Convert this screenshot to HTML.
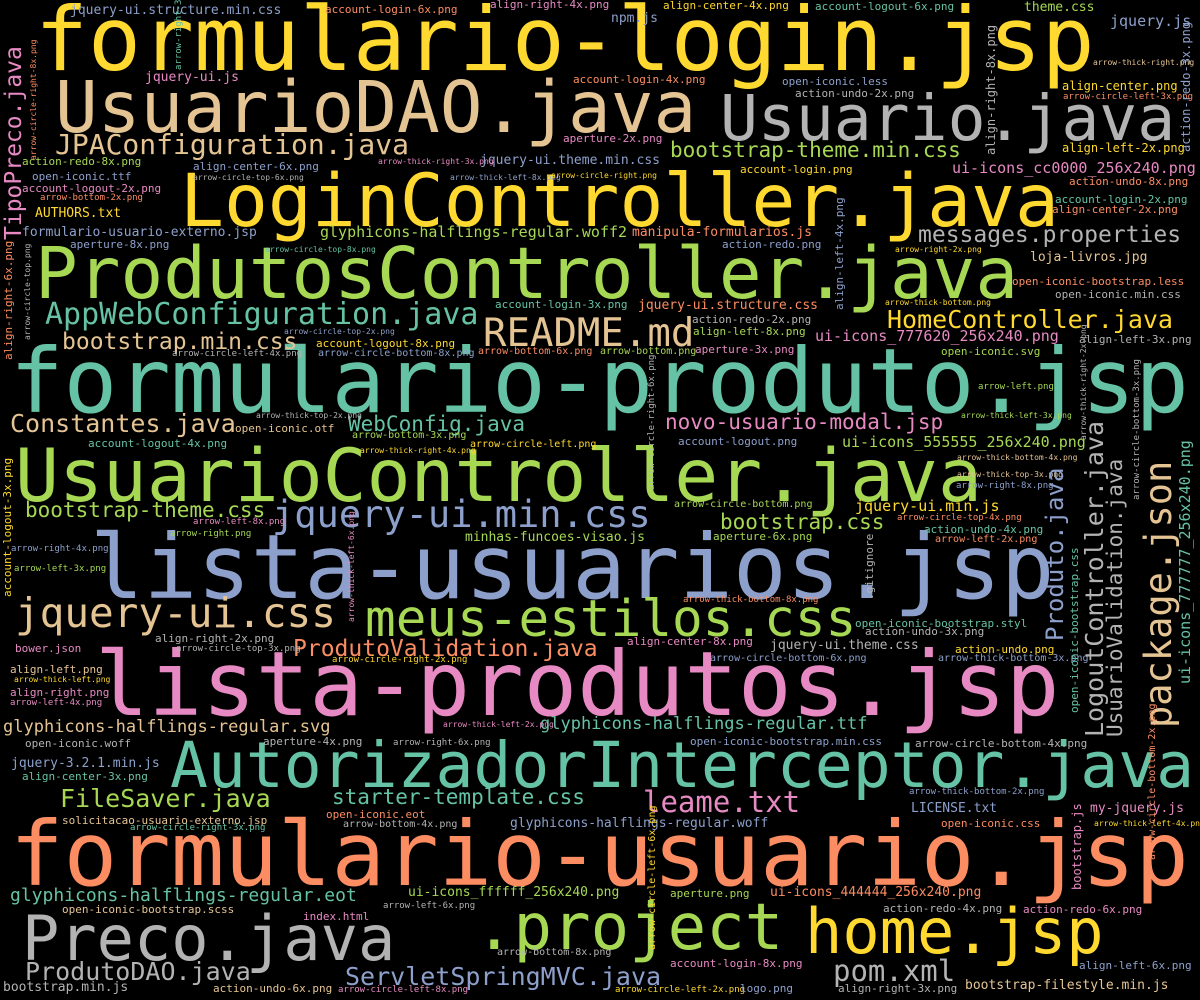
<!DOCTYPE html>
<html><head><meta charset="utf-8"><style>
html,body{margin:0;padding:0;background:#000;width:1200px;height:1000px;overflow:hidden}
body{position:relative;font-family:"DejaVu Sans Mono","Liberation Mono",monospace}
span{position:absolute;white-space:nowrap;line-height:1}
.v{transform:rotate(-90deg);transform-origin:left top}
.G{color:#ffd92f}.g{color:#a6d854}.t{color:#66c2a5}.s{color:#fc8d62}.b{color:#8da0cb}.p{color:#e78ac3}.n{color:#e5c494}.y{color:#b3b3b3}
</style></head><body>
<span class="G" style="left:35px;top:-4px;font-size:88px">formulario-login.jsp</span>
<span class="n" style="left:55px;top:72px;font-size:71px">UsuarioDAO.java</span>
<span class="y" style="left:720px;top:87px;font-size:63px">Usuario.java</span>
<span class="n" style="left:55px;top:131px;font-size:28px">JPAConfiguration.java</span>
<span class="G" style="left:180px;top:165px;font-size:73px">LoginController.java</span>
<span class="g" style="left:35px;top:238px;font-size:71px">ProdutosController.java</span>
<span class="t" style="left:45px;top:300px;font-size:30px">AppWebConfiguration.java</span>
<span class="n" style="left:483px;top:314px;font-size:39px">README.md</span>
<span class="t" style="left:10px;top:337px;font-size:89px">formulario-produto.jsp</span>
<span class="n" style="left:10px;top:411px;font-size:25px">Constantes.java</span>
<span class="t" style="left:348px;top:414px;font-size:21px">WebConfig.java</span>
<span class="p" style="left:665px;top:412px;font-size:21px">novo-usuario-modal.jsp</span>
<span class="g" style="left:15px;top:440px;font-size:73px">UsuarioController.java</span>
<span class="b" style="left:272px;top:496px;font-size:37px">jquery-ui.min.css</span>
<span class="g" style="left:25px;top:500px;font-size:21px">bootstrap-theme.css</span>
<span class="b" style="left:90px;top:523px;font-size:89px">lista-usuarios.jsp</span>
<span class="n" style="left:15px;top:593px;font-size:41px">jquery-ui.css</span>
<span class="g" style="left:365px;top:594px;font-size:51px">meus-estilos.css</span>
<span class="p" style="left:95px;top:640px;font-size:89px">lista-produtos.jsp</span>
<span class="t" style="left:170px;top:734px;font-size:63px">AutorizadorInterceptor.java</span>
<span class="s" style="left:10px;top:810px;font-size:89px">formulario-usuario.jsp</span>
<span class="y" style="left:22px;top:908px;font-size:62px">Preco.java</span>
<span class="g" style="left:475px;top:896px;font-size:64px">.project</span>
<span class="G" style="left:805px;top:901px;font-size:62px">home.jsp</span>
<span class="p" style="left:643px;top:788px;font-size:29px">leame.txt</span>
<span class="g" style="left:670px;top:140px;font-size:21px">bootstrap-theme.min.css</span>
<span class="p" style="left:952px;top:161px;font-size:15px">ui-icons_cc0000_256x240.png</span>
<span class="y" style="left:918px;top:224px;font-size:23px">messages.properties</span>
<span class="G" style="left:887px;top:307px;font-size:25px">HomeController.java</span>
<span class="n" style="left:62px;top:331px;font-size:23px">bootstrap.min.css</span>
<span class="G" style="left:855px;top:499px;font-size:15px">jquery-ui.min.js</span>
<span class="g" style="left:720px;top:512px;font-size:21px">bootstrap.css</span>
<span class="g" style="left:60px;top:786px;font-size:25px">FileSaver.java</span>
<span class="t" style="left:332px;top:787px;font-size:21px">starter-template.css</span>
<span class="t" style="left:10px;top:887px;font-size:18px">glyphicons-halflings-regular.eot</span>
<span class="n" style="left:3px;top:719px;font-size:17px">glyphicons-halflings-regular.svg</span>
<span class="t" style="left:540px;top:716px;font-size:17px">glyphicons-halflings-regular.ttf</span>
<span class="y" style="left:25px;top:959px;font-size:25px">ProdutoDAO.java</span>
<span class="b" style="left:345px;top:964px;font-size:25px">ServletSpringMVC.java</span>
<span class="y" style="left:833px;top:957px;font-size:29px">pom.xml</span>
<span class="s" style="left:293px;top:638px;font-size:23px">ProdutoValidation.java</span>
<span class="G" style="left:35px;top:207px;font-size:13px">AUTHORS.txt</span>
<span class="b" style="left:22px;top:226px;font-size:13px">formulario-usuario-externo.jsp</span>
<span class="g" style="left:320px;top:225px;font-size:15px">glyphicons-halflings-regular.woff2</span>
<span class="s" style="left:632px;top:226px;font-size:13px">manipula-formularios.js</span>
<span class="b" style="left:480px;top:154px;font-size:13px">jquery-ui.theme.min.css</span>
<span class="g" style="left:465px;top:531px;font-size:13px">minhas-funcoes-visao.js</span>
<span class="b" style="left:11px;top:757px;font-size:13px">jquery-3.2.1.min.js</span>
<span class="p" style="left:145px;top:71px;font-size:13px">jquery-ui.js</span>
<span class="b" style="left:611px;top:12px;font-size:13px">npm.js</span>
<span class="g" style="left:1024px;top:1px;font-size:13px">theme.css</span>
<span class="b" style="left:1110px;top:14px;font-size:15px">jquery.js</span>
<span class="b" style="left:70px;top:4px;font-size:13px">jquery-ui.structure.min.css</span>
<span class="s" style="left:325px;top:4px;font-size:11px">account-login-6x.png</span>
<span class="p" style="left:490px;top:-1px;font-size:11px">align-right-4x.png</span>
<span class="G" style="left:663px;top:0px;font-size:11px">align-center-4x.png</span>
<span class="t" style="left:815px;top:1px;font-size:11px">account-logout-6x.png</span>
<span class="n" style="left:1093px;top:59px;font-size:8px">arrow-thick-right.png</span>
<span class="s" style="left:573px;top:74px;font-size:11px">account-login-4x.png</span>
<span class="b" style="left:782px;top:76px;font-size:11px">open-iconic.less</span>
<span class="y" style="left:795px;top:88px;font-size:11px">action-undo-2x.png</span>
<span class="p" style="left:563px;top:133px;font-size:11px">aperture-2x.png</span>
<span class="G" style="left:1062px;top:80px;font-size:12px">align-center.png</span>
<span class="s" style="left:1063px;top:93px;font-size:9px">arrow-circle-left-3x.png</span>
<span class="G" style="left:1062px;top:142px;font-size:12px">align-left-2x.png</span>
<span class="g" style="left:22px;top:156px;font-size:11px">action-redo-8x.png</span>
<span class="p" style="left:378px;top:158px;font-size:8px">arrow-thick-right-3x.png</span>
<span class="b" style="left:32px;top:171px;font-size:11px">open-iconic.ttf</span>
<span class="p" style="left:22px;top:183px;font-size:11px">account-logout-2x.png</span>
<span class="s" style="left:40px;top:194px;font-size:9px">arrow-bottom-2x.png</span>
<span class="b" style="left:193px;top:161px;font-size:11px">align-center-6x.png</span>
<span class="y" style="left:193px;top:174px;font-size:8px">arrow-circle-top-6x.png</span>
<span class="b" style="left:450px;top:174px;font-size:8px">arrow-thick-left-8x.png</span>
<span class="G" style="left:551px;top:172px;font-size:8px">arrow-circle-right.png</span>
<span class="G" style="left:740px;top:164px;font-size:11px">account-login.png</span>
<span class="s" style="left:1069px;top:176px;font-size:11px">action-undo-8x.png</span>
<span class="t" style="left:1055px;top:194px;font-size:11px">account-login-2x.png</span>
<span class="s" style="left:1052px;top:204px;font-size:11px">align-center-2x.png</span>
<span class="b" style="left:70px;top:239px;font-size:11px">aperture-8x.png</span>
<span class="t" style="left:265px;top:246px;font-size:8px">arrow-circle-top-8x.png</span>
<span class="b" style="left:722px;top:239px;font-size:11px">action-redo.png</span>
<span class="G" style="left:895px;top:246px;font-size:8px">arrow-right-2x.png</span>
<span class="n" style="left:1030px;top:251px;font-size:13px">loja-livros.jpg</span>
<span class="s" style="left:1012px;top:276px;font-size:11px">open-iconic-bootstrap.less</span>
<span class="y" style="left:1055px;top:289px;font-size:11px">open-iconic.min.css</span>
<span class="G" style="left:885px;top:299px;font-size:8px">arrow-thick-bottom.png</span>
<span class="t" style="left:495px;top:299px;font-size:11px">account-login-3x.png</span>
<span class="s" style="left:638px;top:299px;font-size:13px">jquery-ui.structure.css</span>
<span class="y" style="left:692px;top:314px;font-size:11px">action-redo-2x.png</span>
<span class="g" style="left:693px;top:326px;font-size:11px">align-left-8x.png</span>
<span class="p" style="left:815px;top:329px;font-size:15px">ui-icons_777620_256x240.png</span>
<span class="y" style="left:1079px;top:334px;font-size:11px">align-left-3x.png</span>
<span class="G" style="left:316px;top:338px;font-size:11px">account-logout-8x.png</span>
<span class="p" style="left:695px;top:344px;font-size:11px">aperture-3x.png</span>
<span class="g" style="left:941px;top:346px;font-size:11px">open-iconic.svg</span>
<span class="b" style="left:284px;top:328px;font-size:8px">arrow-circle-top-2x.png</span>
<span class="y" style="left:172px;top:350px;font-size:9px">arrow-circle-left-4x.png</span>
<span class="b" style="left:318px;top:349px;font-size:10px">arrow-circle-bottom-8x.png</span>
<span class="s" style="left:478px;top:347px;font-size:10px">arrow-bottom-6x.png</span>
<span class="g" style="left:600px;top:347px;font-size:10px">arrow-bottom.png</span>
<span class="g" style="left:978px;top:383px;font-size:9px">arrow-left.png</span>
<span class="g" style="left:961px;top:412px;font-size:8px">arrow-thick-left-3x.png</span>
<span class="y" style="left:256px;top:412px;font-size:8px">arrow-thick-top-2x.png</span>
<span class="n" style="left:235px;top:423px;font-size:11px">open-iconic.otf</span>
<span class="g" style="left:352px;top:431px;font-size:10px">arrow-bottom-3x.png</span>
<span class="t" style="left:88px;top:438px;font-size:11px">account-logout-4x.png</span>
<span class="G" style="left:360px;top:447px;font-size:8px">arrow-thick-right-4x.png</span>
<span class="G" style="left:470px;top:440px;font-size:10px">arrow-circle-left.png</span>
<span class="b" style="left:678px;top:436px;font-size:11px">account-logout.png</span>
<span class="g" style="left:842px;top:435px;font-size:15px">ui-icons_555555_256x240.png</span>
<span class="n" style="left:957px;top:454px;font-size:8px">arrow-thick-bottom-4x.png</span>
<span class="n" style="left:957px;top:471px;font-size:8px">arrow-thick-top-3x.png</span>
<span class="b" style="left:956px;top:482px;font-size:9px">arrow-right-8x.png</span>
<span class="g" style="left:674px;top:500px;font-size:10px">arrow-circle-bottom.png</span>
<span class="s" style="left:897px;top:514px;font-size:9px">arrow-circle-top-4x.png</span>
<span class="t" style="left:924px;top:524px;font-size:11px">action-undo-4x.png</span>
<span class="s" style="left:935px;top:535px;font-size:10px">arrow-left-2x.png</span>
<span class="g" style="left:713px;top:531px;font-size:11px">aperture-6x.png</span>
<span class="p" style="left:193px;top:518px;font-size:9px">arrow-left-8x.png</span>
<span class="g" style="left:170px;top:530px;font-size:9px">arrow-right.png</span>
<span class="b" style="left:11px;top:545px;font-size:9px">arrow-right-4x.png</span>
<span class="g" style="left:14px;top:565px;font-size:9px">arrow-left-3x.png</span>
<span class="s" style="left:683px;top:596px;font-size:9px">arrow-thick-bottom-8x.png</span>
<span class="t" style="left:855px;top:618px;font-size:11px">open-iconic-bootstrap.styl</span>
<span class="y" style="left:865px;top:626px;font-size:11px">action-undo-3x.png</span>
<span class="p" style="left:15px;top:643px;font-size:11px">bower.json</span>
<span class="y" style="left:155px;top:633px;font-size:11px">align-right-2x.png</span>
<span class="y" style="left:176px;top:645px;font-size:9px">arrow-circle-top-3x.png</span>
<span class="G" style="left:955px;top:644px;font-size:11px">action-undo.png</span>
<span class="y" style="left:770px;top:639px;font-size:13px">jquery-ui.theme.css</span>
<span class="p" style="left:627px;top:636px;font-size:11px">align-center-8x.png</span>
<span class="b" style="left:710px;top:654px;font-size:10px">arrow-circle-bottom-6x.png</span>
<span class="G" style="left:332px;top:656px;font-size:9px">arrow-circle-right-2x.png</span>
<span class="b" style="left:938px;top:654px;font-size:10px">arrow-thick-bottom-3x.png</span>
<span class="n" style="left:10px;top:664px;font-size:11px">align-left.png</span>
<span class="G" style="left:14px;top:676px;font-size:8px">arrow-thick-left.png</span>
<span class="p" style="left:10px;top:687px;font-size:11px">align-right.png</span>
<span class="p" style="left:10px;top:699px;font-size:9px">arrow-left-4x.png</span>
<span class="p" style="left:443px;top:721px;font-size:8px">arrow-thick-left-2x.png</span>
<span class="y" style="left:25px;top:738px;font-size:11px">open-iconic.woff</span>
<span class="y" style="left:263px;top:736px;font-size:11px">aperture-4x.png</span>
<span class="y" style="left:393px;top:739px;font-size:9px">arrow-right-6x.png</span>
<span class="b" style="left:690px;top:736px;font-size:11px">open-iconic-bootstrap.min.css</span>
<span class="y" style="left:915px;top:738px;font-size:11px">arrow-circle-bottom-4x.png</span>
<span class="t" style="left:22px;top:771px;font-size:11px">align-center-3x.png</span>
<span class="b" style="left:909px;top:788px;font-size:9px">arrow-thick-bottom-2x.png</span>
<span class="b" style="left:911px;top:802px;font-size:13px">LICENSE.txt</span>
<span class="p" style="left:1090px;top:802px;font-size:13px">my-jquery.js</span>
<span class="n" style="left:62px;top:815px;font-size:11px">solicitacao-usuario-externo.jsp</span>
<span class="t" style="left:130px;top:824px;font-size:9px">arrow-circle-right-3x.png</span>
<span class="s" style="left:326px;top:809px;font-size:11px">open-iconic.eot</span>
<span class="y" style="left:343px;top:820px;font-size:10px">arrow-bottom-4x.png</span>
<span class="b" style="left:510px;top:817px;font-size:13px">glyphicons-halflings-regular.woff</span>
<span class="s" style="left:941px;top:818px;font-size:11px">open-iconic.css</span>
<span class="G" style="left:1094px;top:820px;font-size:8px">arrow-thick-left-4x.png</span>
<span class="g" style="left:408px;top:886px;font-size:13px">ui-icons_ffffff_256x240.png</span>
<span class="g" style="left:670px;top:888px;font-size:11px">aperture.png</span>
<span class="s" style="left:770px;top:886px;font-size:13px">ui-icons_444444_256x240.png</span>
<span class="n" style="left:62px;top:904px;font-size:11px">open-iconic-bootstrap.scss</span>
<span class="p" style="left:303px;top:911px;font-size:11px">index.html</span>
<span class="y" style="left:383px;top:902px;font-size:9px">arrow-left-6x.png</span>
<span class="y" style="left:883px;top:903px;font-size:11px">action-redo-4x.png</span>
<span class="p" style="left:1023px;top:904px;font-size:11px">action-redo-6x.png</span>
<span class="y" style="left:497px;top:948px;font-size:10px">arrow-bottom-8x.png</span>
<span class="p" style="left:670px;top:958px;font-size:11px">account-login-8x.png</span>
<span class="b" style="left:1079px;top:960px;font-size:11px">align-left-6x.png</span>
<span class="y" style="left:3px;top:981px;font-size:13px">bootstrap.min.js</span>
<span class="n" style="left:213px;top:983px;font-size:11px">action-undo-6x.png</span>
<span class="p" style="left:338px;top:986px;font-size:9px">arrow-circle-left-8x.png</span>
<span class="G" style="left:615px;top:986px;font-size:9px">arrow-circle-left-2x.png</span>
<span class="b" style="left:740px;top:983px;font-size:11px">logo.png</span>
<span class="y" style="left:838px;top:983px;font-size:11px">align-right-3x.png</span>
<span class="n" style="left:965px;top:979px;font-size:13px">bootstrap-filestyle.min.js</span>
<span class="n v" style="left:1140px;top:728px;font-size:37px">package.json</span>
<span class="b v" style="left:1043px;top:641px;font-size:24px">Produto.java</span>
<span class="y v" style="left:1082px;top:737px;font-size:25px">LogoutController.java</span>
<span class="y v" style="left:1105px;top:737px;font-size:21px">UsuarioValidation.java</span>
<span class="p v" style="left:3px;top:240px;font-size:23px">TipoPreco.java</span>
<span class="t v" style="left:1178px;top:684px;font-size:15px">ui-icons_777777_256x240.png</span>
<span class="t v" style="left:1069px;top:713px;font-size:11px">open-iconic-bootstrap.css</span>
<span class="p v" style="left:1071px;top:890px;font-size:12px">bootstrap.js</span>
<span class="b v" style="left:1180px;top:152px;font-size:12px">action-redo-3x.png</span>
<span class="y v" style="left:985px;top:155px;font-size:12px">align-right-8x.png</span>
<span class="b v" style="left:834px;top:310px;font-size:11px">align-left-4x.png</span>
<span class="G v" style="left:2px;top:597px;font-size:11px">account-logout-3x.png</span>
<span class="s v" style="left:3px;top:360px;font-size:11px">align-right-6x.png</span>
<span class="y v" style="left:24px;top:340px;font-size:8px">arrow-circle-top.png</span>
<span class="y v" style="left:864px;top:600px;font-size:11px">.gitignore</span>
<span class="p v" style="left:348px;top:622px;font-size:8px">arrow-thick-left-6x.png</span>
<span class="y v" style="left:648px;top:490px;font-size:9px">arrow-circle-right-6x.png</span>
<span class="G v" style="left:648px;top:950px;font-size:10px">arrow-circle-left-6x.png</span>
<span class="y v" style="left:1080px;top:440px;font-size:8px">arrow-thick-right-2x.png</span>
<span class="y v" style="left:1133px;top:500px;font-size:9px">arrow-circle-bottom-3x.png</span>
<span class="s v" style="left:1148px;top:860px;font-size:10px">arrow-circle-bottom-2x.png</span>
<span class="t v" style="left:175px;top:70px;font-size:9px">arrow-right-3x.png</span>
<span class="s v" style="left:30px;top:160px;font-size:8px">arrow-circle-right-8x.png</span>
</body></html>
